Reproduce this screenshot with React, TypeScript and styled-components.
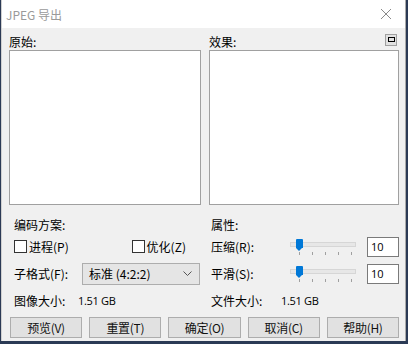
import React from 'react';
import styled, { createGlobalStyle } from 'styled-components';

const GlobalStyle = createGlobalStyle`
  html, body {
    margin: 0;
    padding: 0;
    background: #2b3a55;
  }
  body {
    font-family: "Noto Sans CJK SC", "Noto Sans", sans-serif;
    font-size: 12px;
    color: #000;
  }
`;

const Window = styled.div`
  width: 405px;
  height: 341px;
  margin-left: 1px;
  background: #f0f0f0;
  border-right: 1px solid #aaaaaa;
  border-left: 1px solid #d0d0d0;
  box-sizing: border-box;
  display: flex;
  flex-direction: column;
  overflow: hidden;
`;

const TitleBar = styled.div`
  height: 28px;
  background: #fff;
  display: flex;
  align-items: center;
  justify-content: space-between;
  padding: 0 13px 0 4px;
  flex-shrink: 0;
`;

const Title = styled.span`
  color: #9a9a9a;
  font-size: 12px;
`;

const Body = styled.div`
  flex: 1;
  display: flex;
  flex-direction: column;
  padding: 5px 6px 0 7px;
`;

const PreviewRow = styled.div`
  display: flex;
  gap: 8px;
`;

const PreviewCol = styled.div<{ $w: number }>`
  width: ${(p) => p.$w}px;
  display: flex;
  flex-direction: column;
`;

const PreviewHead = styled.div`
  height: 17px;
  display: flex;
  align-items: center;
  justify-content: space-between;
  font-size: 12px;
`;

const PreviewBox = styled.div`
  height: 155px;
  background: #fff;
  border: 1px solid #a0a0a0;
  box-sizing: border-box;
`;

const ZoomButton = styled.div`
  width: 10px;
  height: 10px;
  border: 1px solid #a0a0a0;
  background: #e1e1e1;
  display: flex;
  align-items: center;
  justify-content: center;
  margin: -4px 2px 0 0;
  &::after {
    content: '';
    width: 5px;
    height: 3px;
    border: 1px solid #000;
  }
`;

const Options = styled.div`
  display: flex;
  margin-top: 9px;
`;

const Section = styled.div<{ $w: number }>`
  width: ${(p) => p.$w}px;
  display: flex;
  flex-direction: column;
`;

const Row = styled.div<{ $h: number }>`
  height: ${(p) => p.$h}px;
  display: flex;
  align-items: center;
`;

const Label = styled.span<{ $w?: number }>`
  width: ${(p) => (p.$w ? `${p.$w}px` : 'auto')};
  flex-shrink: 0;
  white-space: nowrap;
`;

const Value = styled.span`
  font-family: "Open Sans", "Noto Sans", sans-serif;
  font-size: 11px;
  letter-spacing: -0.3px;
`;

const Check = styled.label`
  display: flex;
  align-items: center;
  gap: 2px;
  white-space: nowrap;
`;

const Box = styled.span`
  width: 11px;
  height: 11px;
  border: 1px solid #333;
  background: #fff;
  display: inline-block;
`;

const Select = styled.div`
  width: 118px;
  height: 22px;
  border: 1px solid #adadad;
  background: #e5e5e5;
  box-sizing: border-box;
  display: flex;
  align-items: center;
  justify-content: space-between;
  padding: 0 7px 0 6px;
`;

const Track = styled.div`
  width: 66px;
  height: 16px;
  position: relative;
`;

const TrackLine = styled.div`
  position: absolute;
  left: 0;
  right: 0;
  top: 3px;
  height: 3px;
  background: #e7e7e7;
  border: 1px solid #d6d6d6;
`;

const Thumb = styled.div`
  position: absolute;
  left: 6px;
  top: 0;
  width: 7px;
  height: 9px;
  background: #0078d7;
  border-radius: 1px 1px 0 0;
  &::after {
    content: '';
    position: absolute;
    left: 0;
    top: 9px;
    border-left: 3.5px solid transparent;
    border-right: 3.5px solid transparent;
    border-top: 3px solid #0078d7;
  }
`;

const Tick = styled.div<{ $x: number }>`
  position: absolute;
  left: ${(p) => p.$x}px;
  top: 13px;
  width: 1px;
  height: 3px;
  background: #a0a0a0;
`;

const Edit = styled.div`
  width: 32px;
  height: 20px;
  border: 1px solid #7a7a7a;
  background: #fff;
  box-sizing: border-box;
  display: flex;
  align-items: center;
  padding-left: 3px;
  font-family: "Open Sans", "Noto Sans", sans-serif;
  font-size: 11px;
  margin-left: auto;
`;

const ButtonBar = styled.div`
  display: flex;
  gap: 7px;
  padding-left: 1px;
  margin-top: 4px;
`;

const Button = styled.div`
  width: 73px;
  height: 21px;
  border: 1px solid #adadad;
  background: #e1e1e1;
  box-sizing: border-box;
  display: flex;
  align-items: center;
  justify-content: center;
  white-space: nowrap;
  letter-spacing: -0.3px;
  color: #111;
`;

const Slider = () => (
  <Track>
    <TrackLine />
    <Thumb />
    {[9, 22, 35, 48, 61].map((x) => (
      <Tick key={x} $x={x} />
    ))}
  </Track>
);

export default function App() {
  return (
    <>
      <GlobalStyle />
      <Window>
        <TitleBar>
          <Title>JPEG 导出</Title>
          <svg width="12" height="12" viewBox="0 0 12 12">
            <path d="M1 1 L11 11 M11 1 L1 11" stroke="#8a8a8a" strokeWidth="1" />
          </svg>
        </TitleBar>
        <Body>
          <PreviewRow>
            <PreviewCol $w={193}>
              <PreviewHead>原始:</PreviewHead>
              <PreviewBox />
            </PreviewCol>
            <PreviewCol $w={191}>
              <PreviewHead>
                效果:
                <ZoomButton />
              </PreviewHead>
              <PreviewBox />
            </PreviewCol>
          </PreviewRow>
          <Options>
            <Section $w={200}>
              <Row $h={20} style={{ paddingLeft: 5 }}>编码方案:</Row>
              <Row $h={25} style={{ paddingLeft: 5, justifyContent: 'space-between', paddingRight: 21 }}>
                <Check>
                  <Box />
                  进程(P)
                </Check>
                <Check>
                  <Box />
                  优化(Z)
                </Check>
              </Row>
              <Row $h={29} style={{ paddingLeft: 5 }}>
                <Label $w={68}>子格式(F):</Label>
                <Select>
                  <span>标准 (4:2:2)</span>
                  <svg width="9" height="5" viewBox="0 0 9 5">
                    <path d="M0.5 0.5 L4.5 4.5 L8.5 0.5" fill="none" stroke="#555" strokeWidth="1" />
                  </svg>
                </Select>
              </Row>
              <Row $h={25} style={{ paddingLeft: 5 }}>
                <Label $w={64}>图像大小:</Label>
                <Value>1.51 GB</Value>
              </Row>
            </Section>
            <Section $w={190} style={{ marginLeft: 4 }}>
              <Row $h={20}>属性:</Row>
              <Row $h={25}>
                <Label $w={79}>压缩(R):</Label>
                <Slider />
                <Edit>10</Edit>
              </Row>
              <Row $h={29}>
                <Label $w={79}>平滑(S):</Label>
                <Slider />
                <Edit>10</Edit>
              </Row>
              <Row $h={25}>
                <Label $w={70}>文件大小:</Label>
                <Value>1.51 GB</Value>
              </Row>
            </Section>
          </Options>
          <ButtonBar>
            <Button>预览(V)</Button>
            <Button>重置(T)</Button>
            <Button>确定(O)</Button>
            <Button>取消(C)</Button>
            <Button>帮助(H)</Button>
          </ButtonBar>
        </Body>
      </Window>
    </>
  );
}
